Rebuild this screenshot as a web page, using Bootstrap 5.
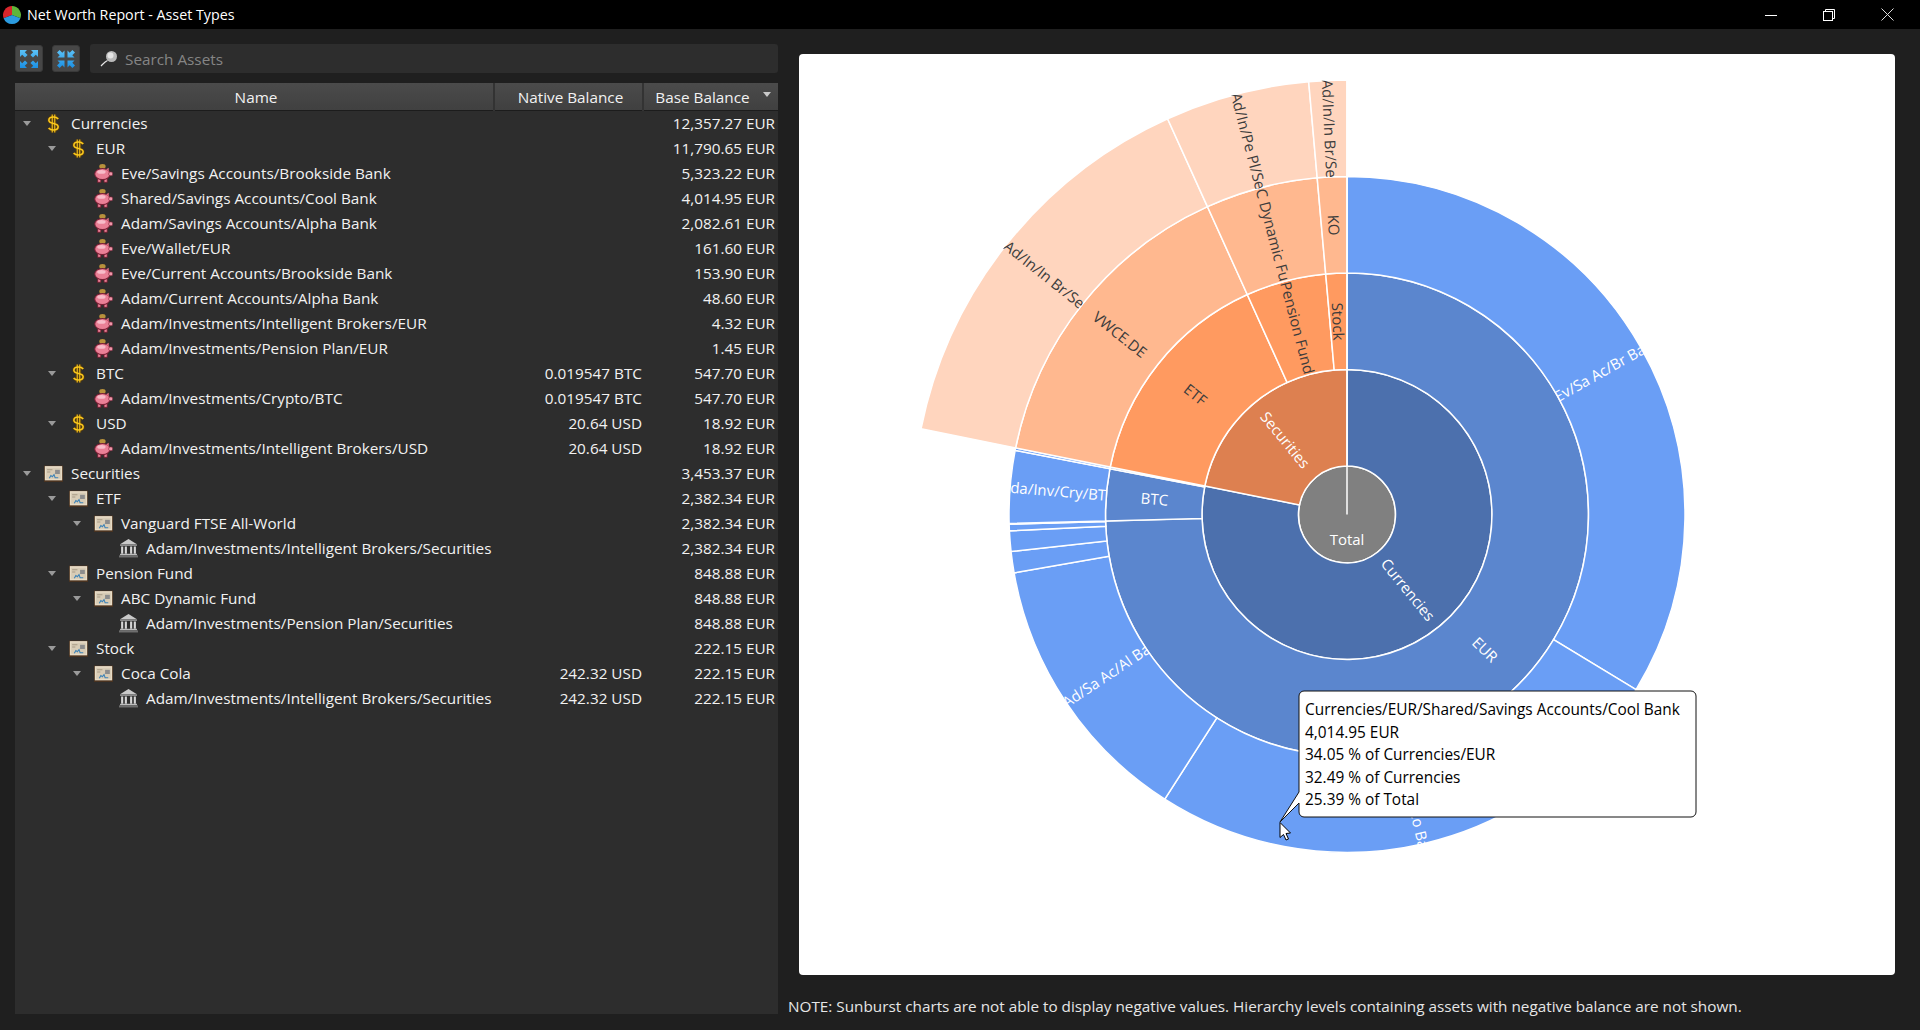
<!DOCTYPE html>
<html lang="en">
<head>
<meta charset="UTF-8">
<title>Net Worth Report - Asset Types</title>
<link href="https://cdn.jsdelivr.net/npm/bootstrap@5.3.0/dist/css/bootstrap.min.css" rel="stylesheet">
<style>
    html, body { height: 100%; }
    body { background: #1f1f1f; color: #f2f2f2; font-family: "Open Sans", "Noto Sans", sans-serif; font-size: 15.3px; overflow: hidden; }
    .title-bar { height: 29px; background: #000; color: #fff; font-size: 14.25px; padding-right: 4px; }
    .title-bar .app-ico { width: 18px; height: 18px; margin: 0 6px 0 3px; }
    .win-btn { width: 58px; height: 29px; }
    .left-pane { width: 763px; margin: 15px 0 16px 15px; }
    .tool-btn { width: 28px; height: 27px; padding: 0; margin-right: 9px; background: #474747; border: 1px solid #3a3a3a; border-radius: 3px; }
    .search-box { height: 29px; margin-left: 1px; background: #2d2d2d; border-radius: 3px; padding-left: 10px; }
    .search-box input { background: transparent; border: 0; padding: 0 0 0 7px; color: #f2f2f2; font-size: 15.3px; box-shadow: none; height: 27px; }
    .search-box input::placeholder { color: #858585; opacity: 1; }
    .tree-pane { margin-top: 10px; background: #2d2d2d; }
    .asset-table { table-layout: fixed; margin: 0; width: 763px; --bs-table-bg: transparent; --bs-table-color: #f2f2f2; color: #f2f2f2; }
    .asset-table th { height: 27px; padding: 0 0 1px 4px; font-weight: 400; text-align: center; color: #f2f2f2; background: linear-gradient(#4b4b4b, #404040); border-bottom: 1px solid #1c1c1c; border-left: 2px solid #333; }
    .asset-table th:first-child { border-left: 0; }
    .asset-table td { height: 25px; padding: 0 3px 0 0; line-height: 25px; text-align: right; white-space: nowrap; }
    .asset-table td:nth-child(2) { padding-right: 1px; }
    .asset-table td.name-cell { text-align: left; padding: 0; }
    .name-in { height: 25px; }
    .lvl-0 { padding-left: 8px; }
    .lvl-1 { padding-left: 33px; }
    .lvl-2 { padding-left: 58px; }
    .lvl-3 { padding-left: 83px; }
    .tri { width: 0; height: 0; border-left: 4.5px solid transparent; border-right: 4.5px solid transparent; border-top: 5px solid #9a9a9a; margin-right: 13px; }
    .tri-none { border-top-color: transparent; }
    .tree-ico { width: 19px; height: 19px; margin-right: 8px; flex: none; }
    .sort-tri { border-top-color: #c9c9c9; margin: 0 0 6px 13px; display: inline-block; }
    .right-pane { margin-left: 10px; width: 1107px; padding-top: 25px; }
    .chart-box { margin-left: 11px; height: 921px; background: #fff; border-radius: 4px; }
    .chart-box svg { display: block; font-family: "Open Sans", "Noto Sans", sans-serif; font-size: 15px; }
    .tip-line { font-size: 15.4px; }
    .note-line { margin-top: 22px; color: #e6e6e6; line-height: 19px; }
</style>
</head>
<body class="d-flex flex-column">

<svg width="0" height="0" class="d-block">
    <defs>
        <linearGradient id="arrow-blue" x1="0" y1="0" x2="0" y2="1">
            <stop offset="0" stop-color="#5cc2f7"/>
            <stop offset="1" stop-color="#1b8fe2"/>
        </linearGradient>
        <symbol id="ico-dollar" viewBox="0 0 18 18">
            <path d="M13.500 4.800C12.400 3.400 11 2.900 9 2.900 6.400 2.900 4.600 4.100 4.600 6c0 4.100 8.800 2 8.800 6.100 0 1.900-1.900 3.100-4.400 3.100-2.100 0-3.600-.6-4.600-2M7.800.4v17.200M10.200.4v17.200" fill="none" stroke="#6b4300" stroke-width="3" opacity=".6"/>
            <path d="M13.500 4.800C12.400 3.400 11 2.900 9 2.900 6.400 2.900 4.600 4.100 4.600 6c0 4.100 8.800 2 8.800 6.100 0 1.900-1.900 3.100-4.400 3.100-2.100 0-3.600-.6-4.600-2" fill="none" stroke="#fcc91c" stroke-width="1.500"/>
            <path d="M7.800.4v17.200M10.200.4v17.200" stroke="#fcc91c" stroke-width="1"/>
        </symbol>
        <symbol id="ico-pig" viewBox="0 0 18 18">
            <ellipse cx="8" cy="2.300" rx="3" ry="2.200" fill="#b8923c"/>
            <rect x="3.500" y="13" width="3" height="4.300" fill="#e97f95" stroke="#6e1a2c" stroke-width=".8"/>
            <rect x="9.500" y="13" width="3" height="4.300" fill="#e97f95" stroke="#6e1a2c" stroke-width=".8"/>
            <ellipse cx="8" cy="9.500" rx="7.300" ry="5.300" fill="#ea8096" stroke="#7a1f35"/>
            <rect x="14" y="7.500" width="3.600" height="3.600" rx="1.200" fill="#ef97aa" stroke="#7a1f35" stroke-width=".6"/>
            <path d="M11.500 5l2.500-1.500v3.500z" fill="#d96a82"/>
            <ellipse cx="7" cy="7.500" rx="4" ry="1.800" fill="#f8bcc9"/>
        </symbol>
        <symbol id="ico-cert" viewBox="0 0 18 18">
            <rect x="0" y="1.500" width="18" height="15.500" fill="#4a3320"/>
            <rect x=".8" y="2" width="16.400" height="13.500" fill="#e8dcc6"/>
            <rect x="2" y="3.500" width="14" height="10.500" fill="#d8ccb6"/>
            <path d="M3 5.500h5M3 7.500h3" stroke="#a89a85" stroke-width="1"/>
            <rect x="10.500" y="5.500" width="4.500" height="4" fill="#8d8d8d"/>
            <path d="M5 13.500l1.500-2.500 1.500 1 1.500-2 1 3h3" fill="none" stroke="#3d83b8" stroke-width="1"/>
        </symbol>
        <symbol id="ico-bank" viewBox="0 0 18 18">
            <path d="M9 0L17 5H1z" fill="#c9c9c9"/>
            <rect x="1" y="5" width="16" height="1.600" fill="#8f8f8f"/>
            <path d="M3 7v7M6.500 7v7M11.500 7v7M15 7v7" stroke="#d6d6d6" stroke-width="2"/>
            <rect x="1" y="14" width="16" height="1.500" fill="#bdbdbd"/>
            <rect x="0" y="15.500" width="18" height="2" fill="#6e6e6e"/>
        </symbol>
    </defs>
</svg>

<div class="title-bar d-flex align-items-center flex-shrink-0">
    <svg class="app-ico" viewBox="0 0 18 18">
        <path d="M9 9V0A9 9 0 0 0 .6 12.200z" fill="#d8262c"/>
        <path d="M9 9V0a9 9 0 0 1 8.400 12.200z" fill="#5fb53a"/>
        <path d="M9 9L.6 12.200a9 9 0 0 0 16.800 0z" fill="#2b9be0"/>
    </svg>
    <span class="flex-grow-1">Net Worth Report - Asset Types</span>
    <div class="win-btn d-flex align-items-center justify-content-center">
        <svg width="12" height="12" viewBox="0 0 12 12"><path d="M0 6.500h12" stroke="#fff"/></svg>
    </div>
    <div class="win-btn d-flex align-items-center justify-content-center">
        <svg width="12" height="12" viewBox="0 0 12 12"><rect x=".5" y="2.500" width="9" height="9" fill="none" stroke="#fff"/><path d="M2.500 2.500v-2h9v9h-2" fill="none" stroke="#fff"/></svg>
    </div>
    <div class="win-btn d-flex align-items-center justify-content-center">
        <svg width="13" height="13" viewBox="0 0 13 13"><path d="M.5.5l12 12M12.500.5l-12 12" stroke="#ddd"/></svg>
    </div>
</div>

<div class="d-flex flex-grow-1 overflow-hidden">
    <div class="left-pane d-flex flex-column">
        <div class="d-flex align-items-center">
            <button class="btn tool-btn d-flex align-items-center justify-content-center" aria-label="Expand all">
                <svg width="20" height="20" viewBox="0 0 20 20" fill="url(#arrow-blue)"><path d="M1 1h7L5.800 3.200 8.600 6 6 8.600 3.200 5.800 1 8zM19 1v7l-2.200-2.200L14 8.600 11.400 6l2.800-2.800L12 1zM1 19v-7l2.200 2.200L6 11.400l2.600 2.600-2.800 2.800L8 19zM19 19h-7l2.200-2.200L11.400 14l2.600-2.600 2.800 2.800L19 12z"/></svg>
            </button>
            <button class="btn tool-btn d-flex align-items-center justify-content-center" aria-label="Collapse all">
                <svg width="20" height="20" viewBox="0 0 20 20" fill="url(#arrow-blue)"><path d="M8.500 8.500h-7l2.200-2.200L1 3.600 3.600 1l2.700 2.700L8.500 1.500zM11.500 8.500v-7l2.200 2.200L16.400 1 19 3.600l-2.700 2.700 2.200 2.200zM8.500 11.500v7l-2.200-2.200L3.600 19 1 16.400l2.700-2.700-2.200-2.200zM11.500 11.500h7l-2.200 2.200 2.700 2.700-2.600 2.600-2.700-2.700-2.200 2.200z"/></svg>
            </button>
            <div class="search-box d-flex align-items-center flex-grow-1">
                <svg width="18" height="18" viewBox="0 0 18 18" class="flex-shrink-0"><circle cx="11.500" cy="6.500" r="5.500" fill="#b9b9b9"/><circle cx="10.500" cy="5.500" r="3" fill="#e4e4e4"/><path d="M7.500 10.500C5 11.500 3 14 1 16" fill="none" stroke="#e6e6e6" stroke-width="1.200"/></svg>
                <input class="form-control" type="text" placeholder="Search Assets">
            </div>
        </div>

        <div class="tree-pane flex-grow-1">
            <table class="table table-borderless asset-table">
                <colgroup><col style="width:479px"><col style="width:149px"><col style="width:135px"></colgroup>
                <thead>
                    <tr><th>Name</th><th>Native Balance</th><th>Base Balance<span class="tri sort-tri"></span></th></tr>
                </thead>
                <tbody>
                    <tr><td class="name-cell"><div class="name-in lvl-0 d-flex align-items-center"><span class="tri"></span><svg class="tree-ico"><use href="#ico-dollar"/></svg>Currencies</div></td><td></td><td>12,357.27 EUR</td></tr>
                    <tr><td class="name-cell"><div class="name-in lvl-1 d-flex align-items-center"><span class="tri"></span><svg class="tree-ico"><use href="#ico-dollar"/></svg>EUR</div></td><td></td><td>11,790.65 EUR</td></tr>
                    <tr><td class="name-cell"><div class="name-in lvl-2 d-flex align-items-center"><span class="tri tri-none"></span><svg class="tree-ico"><use href="#ico-pig"/></svg>Eve/Savings Accounts/Brookside Bank</div></td><td></td><td>5,323.22 EUR</td></tr>
                    <tr><td class="name-cell"><div class="name-in lvl-2 d-flex align-items-center"><span class="tri tri-none"></span><svg class="tree-ico"><use href="#ico-pig"/></svg>Shared/Savings Accounts/Cool Bank</div></td><td></td><td>4,014.95 EUR</td></tr>
                    <tr><td class="name-cell"><div class="name-in lvl-2 d-flex align-items-center"><span class="tri tri-none"></span><svg class="tree-ico"><use href="#ico-pig"/></svg>Adam/Savings Accounts/Alpha Bank</div></td><td></td><td>2,082.61 EUR</td></tr>
                    <tr><td class="name-cell"><div class="name-in lvl-2 d-flex align-items-center"><span class="tri tri-none"></span><svg class="tree-ico"><use href="#ico-pig"/></svg>Eve/Wallet/EUR</div></td><td></td><td>161.60 EUR</td></tr>
                    <tr><td class="name-cell"><div class="name-in lvl-2 d-flex align-items-center"><span class="tri tri-none"></span><svg class="tree-ico"><use href="#ico-pig"/></svg>Eve/Current Accounts/Brookside Bank</div></td><td></td><td>153.90 EUR</td></tr>
                    <tr><td class="name-cell"><div class="name-in lvl-2 d-flex align-items-center"><span class="tri tri-none"></span><svg class="tree-ico"><use href="#ico-pig"/></svg>Adam/Current Accounts/Alpha Bank</div></td><td></td><td>48.60 EUR</td></tr>
                    <tr><td class="name-cell"><div class="name-in lvl-2 d-flex align-items-center"><span class="tri tri-none"></span><svg class="tree-ico"><use href="#ico-pig"/></svg>Adam/Investments/Intelligent Brokers/EUR</div></td><td></td><td>4.32 EUR</td></tr>
                    <tr><td class="name-cell"><div class="name-in lvl-2 d-flex align-items-center"><span class="tri tri-none"></span><svg class="tree-ico"><use href="#ico-pig"/></svg>Adam/Investments/Pension Plan/EUR</div></td><td></td><td>1.45 EUR</td></tr>
                    <tr><td class="name-cell"><div class="name-in lvl-1 d-flex align-items-center"><span class="tri"></span><svg class="tree-ico"><use href="#ico-dollar"/></svg>BTC</div></td><td>0.019547 BTC</td><td>547.70 EUR</td></tr>
                    <tr><td class="name-cell"><div class="name-in lvl-2 d-flex align-items-center"><span class="tri tri-none"></span><svg class="tree-ico"><use href="#ico-pig"/></svg>Adam/Investments/Crypto/BTC</div></td><td>0.019547 BTC</td><td>547.70 EUR</td></tr>
                    <tr><td class="name-cell"><div class="name-in lvl-1 d-flex align-items-center"><span class="tri"></span><svg class="tree-ico"><use href="#ico-dollar"/></svg>USD</div></td><td>20.64 USD</td><td>18.92 EUR</td></tr>
                    <tr><td class="name-cell"><div class="name-in lvl-2 d-flex align-items-center"><span class="tri tri-none"></span><svg class="tree-ico"><use href="#ico-pig"/></svg>Adam/Investments/Intelligent Brokers/USD</div></td><td>20.64 USD</td><td>18.92 EUR</td></tr>
                    <tr><td class="name-cell"><div class="name-in lvl-0 d-flex align-items-center"><span class="tri"></span><svg class="tree-ico"><use href="#ico-cert"/></svg>Securities</div></td><td></td><td>3,453.37 EUR</td></tr>
                    <tr><td class="name-cell"><div class="name-in lvl-1 d-flex align-items-center"><span class="tri"></span><svg class="tree-ico"><use href="#ico-cert"/></svg>ETF</div></td><td></td><td>2,382.34 EUR</td></tr>
                    <tr><td class="name-cell"><div class="name-in lvl-2 d-flex align-items-center"><span class="tri"></span><svg class="tree-ico"><use href="#ico-cert"/></svg>Vanguard FTSE All-World</div></td><td></td><td>2,382.34 EUR</td></tr>
                    <tr><td class="name-cell"><div class="name-in lvl-3 d-flex align-items-center"><span class="tri tri-none"></span><svg class="tree-ico"><use href="#ico-bank"/></svg>Adam/Investments/Intelligent Brokers/Securities</div></td><td></td><td>2,382.34 EUR</td></tr>
                    <tr><td class="name-cell"><div class="name-in lvl-1 d-flex align-items-center"><span class="tri"></span><svg class="tree-ico"><use href="#ico-cert"/></svg>Pension Fund</div></td><td></td><td>848.88 EUR</td></tr>
                    <tr><td class="name-cell"><div class="name-in lvl-2 d-flex align-items-center"><span class="tri"></span><svg class="tree-ico"><use href="#ico-cert"/></svg>ABC Dynamic Fund</div></td><td></td><td>848.88 EUR</td></tr>
                    <tr><td class="name-cell"><div class="name-in lvl-3 d-flex align-items-center"><span class="tri tri-none"></span><svg class="tree-ico"><use href="#ico-bank"/></svg>Adam/Investments/Pension Plan/Securities</div></td><td></td><td>848.88 EUR</td></tr>
                    <tr><td class="name-cell"><div class="name-in lvl-1 d-flex align-items-center"><span class="tri"></span><svg class="tree-ico"><use href="#ico-cert"/></svg>Stock</div></td><td></td><td>222.15 EUR</td></tr>
                    <tr><td class="name-cell"><div class="name-in lvl-2 d-flex align-items-center"><span class="tri"></span><svg class="tree-ico"><use href="#ico-cert"/></svg>Coca Cola</div></td><td>242.32 USD</td><td>222.15 EUR</td></tr>
                    <tr><td class="name-cell"><div class="name-in lvl-3 d-flex align-items-center"><span class="tri tri-none"></span><svg class="tree-ico"><use href="#ico-bank"/></svg>Adam/Investments/Intelligent Brokers/Securities</div></td><td>242.32 USD</td><td>222.15 EUR</td></tr>
                </tbody>
            </table>
        </div>
    </div>

    <div class="right-pane">
        <div class="chart-box">
            <svg id="sunburst" width="1096" height="921" viewBox="-548 -460.5 1096 921"></svg>
        </div>
        <div class="note-line">NOTE: Sunburst charts are not able to display negative values. Hierarchy levels containing assets with negative balance are not shown.</div>
    </div>
</div>

<script src="https://cdn.jsdelivr.net/npm/bootstrap@5.3.0/dist/js/bootstrap.bundle.min.js"></script>
<script>
    const radii = [48.5, 145, 241.5, 338, 434.5];
    const blues = ['#4c70ad', '#5b86ce', '#6a9ef5'];
    const oranges = ['#dd8050', '#ff9a60', '#ffb88f', '#ffd5be'];
    const total = 15810.64;
    const NS = 'http://www.w3.org/2000/svg';
    const svg = document.getElementById('sunburst');

    const data = [
        { label: 'Currencies', v: 12357.27, pal: blues, light: true, kids: [
            { label: 'EUR', v: 11790.65, kids: [
                { label: 'Ev/Sa Ac/Br Ba', v: 5323.22 },
                { label: 'Sh/Sa Ac/Co Ba', v: 4014.95 },
                { label: 'Ad/Sa Ac/Al Ba', v: 2082.61 },
                { v: 161.60 }, { v: 153.90 }, { v: 48.60 }, { v: 4.32 }, { v: 1.45 }
            ]},
            { label: 'BTC', v: 547.70, kids: [{ label: 'Ada/Inv/Cry/BTC', v: 547.70 }] },
            { v: 18.92, kids: [{ v: 18.92 }] }
        ]},
        { label: 'Securities', v: 3453.37, pal: oranges, kids: [
            { label: 'ETF', v: 2382.34, kids: [{ label: 'VWCE.DE', v: 2382.34, kids: [{ label: 'Ad/In/In Br/Se', v: 2382.34 }] }] },
            { label: 'Pension Fund', v: 848.88, kids: [{ label: 'ABC Dynamic Fund', v: 848.88, kids: [{ label: 'Ad/In/Pe Pl/Se', v: 848.88 }] }] },
            { label: 'Stock', v: 222.15, kids: [{ label: 'KO', v: 222.15, kids: [{ label: 'Ad/In/In Br/Se', v: 222.15 }] }] }
        ]}
    ];

    function add(parent, tag, attrs, text) {
        const el = document.createElementNS(NS, tag);
        for (const k in attrs) el.setAttribute(k, attrs[k]);
        if (text) el.textContent = text;
        parent.appendChild(el);
        return el;
    }

    function polar(r, a) {
        const t = a * Math.PI / 180;
        return [r * Math.sin(t), -r * Math.cos(t)];
    }

    function arcPath(r0, r1, a0, a1) {
        const big = a1 - a0 > 180 ? 1 : 0;
        const p = [polar(r1, a0), polar(r1, a1), polar(r0, a1), polar(r0, a0)];
        return `M${p[0]}A${r1} ${r1} 0 ${big} 1 ${p[1]}L${p[2]}A${r0} ${r0} 0 ${big} 0 ${p[3]}Z`;
    }

    // one clip per ring, long labels get cut at the ring edges
    const defs = add(svg, 'defs', {});
    for (let i = 0; i < 4; i++) {
        const clip = add(defs, 'clipPath', { id: 'ring' + i });
        const c = r => `M${-r} 0A${r} ${r} 0 1 0 ${r} 0A${r} ${r} 0 1 0 ${-r} 0Z`;
        add(clip, 'path', { d: c(radii[i]) + c(radii[i + 1]), 'clip-rule': 'evenodd' });
    }

    const slices = add(svg, 'g', {});
    const labels = add(svg, 'g', {});

    function drawNodes(nodes, depth, start, pal, light) {
        let a = start;
        nodes.forEach(n => {
            const p = n.pal || pal;
            const lt = n.pal ? !!n.light : light;
            const span = n.v / total * 360;
            add(slices, 'path', { d: arcPath(radii[depth], radii[depth + 1], a, a + span), fill: p[depth], stroke: '#fff', 'stroke-width': 1.5 });
            if (n.label) {
                const mid = a + span / 2;
                const pos = polar((radii[depth] + radii[depth + 1]) / 2, mid);
                const rot = mid < 180 ? mid - 90 : mid - 270;
                const g = add(labels, 'g', { 'clip-path': `url(#ring${depth})` });
                const white = lt || depth === 0;
                add(g, 'text', { x: 0, y: 0, transform: `translate(${pos}) rotate(${rot})`, 'text-anchor': 'middle', 'dominant-baseline': 'central', fill: white ? '#fff' : '#3c3c3c' }, n.label);
            }
            if (n.kids) drawNodes(n.kids, depth + 1, a, p, lt);
            a += span;
        });
    }

    add(slices, 'circle', { r: radii[0], fill: '#808080', stroke: '#fff', 'stroke-width': 1.5 });
    drawNodes(data, 0, 0, null, false);
    add(slices, 'path', { d: 'M0 0V-435', stroke: '#fff', 'stroke-width': 1.5 });
    add(labels, 'text', { x: 0, y: 24, 'text-anchor': 'middle', 'dominant-baseline': 'central', fill: '#fff' }, 'Total');

    // hover balloon and mouse pointer
    add(svg, 'path', {
        d: 'M-43 176.500H344a5 5 0 0 1 5 5V297.500a5 5 0 0 1-5 5H-43a5 5 0 0 1-5-5V288.500L-67 307.500L-48 277.500V181.500a5 5 0 0 1 5-5Z',
        fill: '#fff', stroke: '#111', 'stroke-width': 1
    });
    ['Currencies/EUR/Shared/Savings Accounts/Cool Bank', '4,014.95 EUR', '34.05 % of Currencies/EUR', '32.49 % of Currencies', '25.39 % of Total'].forEach((t, i) => {
        add(svg, 'text', { x: -42, y: 200.5 + i * 22.5, fill: '#000', class: 'tip-line' }, t);
    });
    add(svg, 'path', { d: 'M-67 308v15l3.500-3 2.500 5.500 2.500-1-2.500-5.500 4.500-.5z', fill: '#fff', stroke: '#000', 'stroke-width': 1 });
</script>
</body>
</html>
